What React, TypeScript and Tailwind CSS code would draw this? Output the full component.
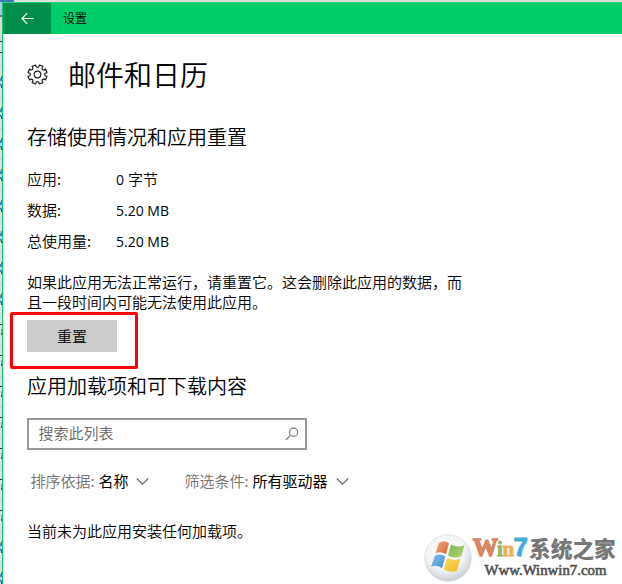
import type { ReactNode } from "react";

const usage = [
  ["应用:", "0 字节"],
  ["数据:", "5.20 MB"],
  ["总使用量:", "5.20 MB"],
];

const stripRows = ["file", "file", "file", "file", "file", "file", "file", "file", "pen", "pen", "pen", "pen", "pen", "pen", "pen", "file", "file"];

function BackgroundStrip() {
  return (
    <div className="flex h-[584px] w-[2px] shrink-0 flex-col overflow-hidden bg-[#e3dfdc]">
      <div className="h-[17px] shrink-0 border-y-2 border-[#3b78bd] bg-[#a9c6e6]" />
      <div className="h-[24px] shrink-0 bg-[#d9d9d9]" />
      <div className="h-[12px] shrink-0 border-y border-[#333] bg-[#dedede]" />
      <div className="h-[13px] shrink-0 bg-[#dedede]" />
      {stripRows.map((kind, i) => (
        <div key={i} className="flex h-[31px] shrink-0 flex-col">
          <div className="h-[10px] shrink-0 border-t border-[#cfcccb]">
            {kind === "pen" && <div className="mt-[9px] h-px bg-[#333]" />}
          </div>
          {kind === "file" ? (
            <div className="flex h-[12px] flex-col">
              <div className="ml-px h-[2px] bg-[#8a6a3c]" />
              <div className="h-[3px] bg-[#3f86c4]" />
              <div className="h-[3px] bg-[#b8d8ea]" />
              <div className="h-[2px] bg-[#3f86c4]" />
              <div className="ml-px h-[2px] bg-[#4b3d2c]" />
            </div>
          ) : (
            <div className="ml-px mt-[5px] h-[6px] border-b-2 border-[#55482d] bg-[#c49a55]" />
          )}
        </div>
      ))}
    </div>
  );
}

function Gear() {
  const teeth = Array.from({ length: 8 }, (_, i) => {
    const point = (r: number, deg: number) => {
      const a = ((deg + i * 45) * Math.PI) / 180;
      return `${(10.5 + r * Math.sin(a)).toFixed(2)} ${(10.5 - r * Math.cos(a)).toFixed(2)}`;
    };
    return `${point(7.9, -13)} L${point(9.7, -11)} L${point(9.7, 11)} L${point(7.9, 13)} Q${point(6.4, 22.5)} ${point(7.9, 32)}`;
  });
  return (
    <svg className="h-[21px] w-[21px] shrink-0" viewBox="0 0 21 21" fill="none" stroke="#222" strokeWidth="1.2" strokeLinejoin="round">
      <g transform="rotate(22.5 10.5 10.5)">
        <path d={`M${teeth.join(" L")} Z`} />
      </g>
      <circle cx="10.5" cy="10.5" r="3.3" />
    </svg>
  );
}

function Chevron() {
  return (
    <svg className="ml-[8px] h-[8px] w-[13px]" viewBox="0 0 13 8" fill="none" stroke="#666" strokeWidth="1.1">
      <path d="M.8 1.5 L6.5 7.2 L12.2 1.5" />
    </svg>
  );
}

function Filter({ label, children }: { label: string; children: ReactNode }) {
  return (
    <div className="flex items-center whitespace-pre">
      <span className="text-[#717171]">{label}</span>
      <span className="ml-[4px] font-normal">{children}</span>
      <Chevron />
    </div>
  );
}

function WindowsOrb() {
  return (
    <svg className="h-[48px] w-[48px] shrink-0" viewBox="0 0 48 48">
      <defs>
        <radialGradient id="orb" cx="45%" cy="35%" r="65%">
          <stop offset="0" stopColor="#fff" />
          <stop offset=".65" stopColor="#f1f3f5" />
          <stop offset="1" stopColor="#c8cdd3" />
        </radialGradient>
        <linearGradient id="red" x2="1" y2="1"><stop stopColor="#f4ad7f" /><stop offset="1" stopColor="#d95e38" /></linearGradient>
        <linearGradient id="green" x2="1" y2="1"><stop stopColor="#79b54d" /><stop offset="1" stopColor="#b5d777" /></linearGradient>
        <linearGradient id="blue" x2="1" y2="1"><stop stopColor="#8ac5ee" /><stop offset="1" stopColor="#3f8cca" /></linearGradient>
        <linearGradient id="yellow" x2="1" y2="1"><stop stopColor="#fddc61" /><stop offset="1" stopColor="#efb82d" /></linearGradient>
      </defs>
      <circle cx="24" cy="24" r="23.3" fill="url(#orb)" stroke="#d3d8dd" strokeWidth=".7" />
      <path d="M14.8 9 Q20 5.5 25 9.3 L22 20.3 Q16.5 16.7 11.5 19.5 Z" fill="url(#red)" />
      <path d="M27 10.5 Q33 14 40.5 11.2 L37.2 22.5 Q30.5 25.2 24 21.4 Z" fill="url(#green)" />
      <path d="M10.8 21.8 Q16 19 21.4 22.3 L18 34.2 Q12.5 30.2 7 33 Z" fill="url(#blue)" />
      <path d="M23.2 23.6 Q30 27.5 36.5 24.8 L33 36.8 Q26 39.5 19.8 35.4 Z" fill="url(#yellow)" />
    </svg>
  );
}

function Watermark() {
  return (
    <div className="absolute left-[424px] top-[534px] flex">
      <WindowsOrb />
      <svg className="h-[50px] w-[150px] overflow-visible" viewBox="0 0 150 50">
        <text x="1" y="22" fontFamily="'Liberation Serif', serif" fontWeight="700" fontSize="25" strokeWidth=".9">
          <tspan fill="#d98664" stroke="#d98664" strokeWidth="1.6">W</tspan>
          <tspan x="25" fontSize="21" fill="#8cb966" stroke="#8cb966">i</tspan>
          <tspan x="30.5" fontSize="21" fill="#f0ae54" stroke="#f0ae54">n</tspan>
          <tspan x="41.5" fontFamily="'Liberation Sans', sans-serif" fontSize="26" fill="#43add8" stroke="#43add8">7</tspan>
          <tspan x="57" y="22.5" fontFamily="'Noto Sans CJK SC', sans-serif" fontWeight="900" fontSize="21.7" stroke="none" fill="#777">系统之家</tspan>
        </text>
        <text x="12.5" y="40.5" textLength="122" lengthAdjust="spacingAndGlyphs" fontFamily="'Liberation Serif', serif" fontSize="15" fill="#505050" stroke="#505050" strokeWidth=".6">
          Www.Winwin7.com
        </text>
      </svg>
    </div>
  );
}

export default function App() {
  return (
    <div className="relative flex h-[584px] w-[622px] overflow-hidden bg-white font-['Noto_Sans_CJK_SC',sans-serif] text-[15px] font-[350] leading-[20px] text-black">
      <BackgroundStrip />
      <div className="flex min-w-0 flex-1 flex-col">
        <div className="flex h-[2px] shrink-0 bg-[#dedede]">
          <div className="w-[12px] bg-[#3b78bd]" />
        </div>
        <div className="flex min-h-0 flex-1 flex-col border-l border-[#00cc6a]">
          <header className="flex h-[32px] shrink-0 items-center border-t border-[#13d477] bg-[#00cc6a] text-[12px]">
            <button className="flex h-full w-[48px] items-center justify-center bg-[#008c49]">
              <svg className="h-[12px] w-[13px]" viewBox="0 0 13 12" fill="none" stroke="#fff" strokeWidth="1.2">
                <path d="M12.5 5.5 H1 M6.2 .2 L.9 5.5 L6.2 10.8" />
              </svg>
            </button>
            <span className="-mt-[1px] ml-[12px]">设置</span>
          </header>
          <main className="flex flex-col pl-[24px]">
            <div className="mt-[20px] flex h-[40px] items-center gap-[20px]">
              <Gear />
              <h1 className="-mt-[1px] text-[28px] font-[350] leading-[40px]">邮件和日历</h1>
            </div>
            <h2 className="mt-[29px] text-[20px] leading-[28px]">存储使用情况和应用重置</h2>
            <div className="mt-[13px] flex flex-col">
              {usage.map(([name, value]) => (
                <div key={name} className="flex h-[31px] items-center">
                  <span className="-mt-[2px] w-[89px]">{name}</span>
                  <span className="font-['Open_Sans','Noto_Sans_CJK_SC',sans-serif]">
                    {value === "0 字节" ? (
                      <><span className="text-[14px] font-normal">0</span> 字节</>
                    ) : (
                      <span className="text-[14px] font-normal">{value}</span>
                    )}
                  </span>
                </div>
              ))}
            </div>
            <p className="mt-[15px] whitespace-nowrap">
              如果此应用无法正常运行，请重置它。这会删除此应用的数据，而
              <br />
              且一段时间内可能无法使用此应用。
            </p>
            <button className="mt-[8px] h-[32px] w-[90px] bg-[#ccc]">重置</button>
            <h2 className="mt-[20px] text-[20px] leading-[28px]">应用加载项和可下载内容</h2>
            <div className="mt-[18px] flex h-[32px] w-[280px] items-center justify-between border-2 border-[#999] pl-[9.5px] pr-[6px] text-[#666]">
              <span className="-mt-[2px]">搜索此列表</span>
              <svg className="h-[14px] w-[14px]" viewBox="0 0 14 14" fill="none" stroke="#777" strokeWidth="1.1">
                <circle cx="8.6" cy="5.2" r="4.1" />
                <path d="M5.7 8.1 L.8 13" />
              </svg>
            </div>
            <div className="ml-[3.4px] mt-[21px] flex gap-[35px]">
              <Filter label="排序依据:">名称</Filter>
              <Filter label="筛选条件:">所有驱动器</Filter>
            </div>
            <p className="mt-[30px] whitespace-nowrap">当前未为此应用安装任何加载项。</p>
          </main>
        </div>
      </div>
      <div className="absolute left-[10px] top-[312px] h-[57px] w-[128px] rounded-[2px] border-[3px] border-[#f00]" />
      <Watermark />
    </div>
  );
}
